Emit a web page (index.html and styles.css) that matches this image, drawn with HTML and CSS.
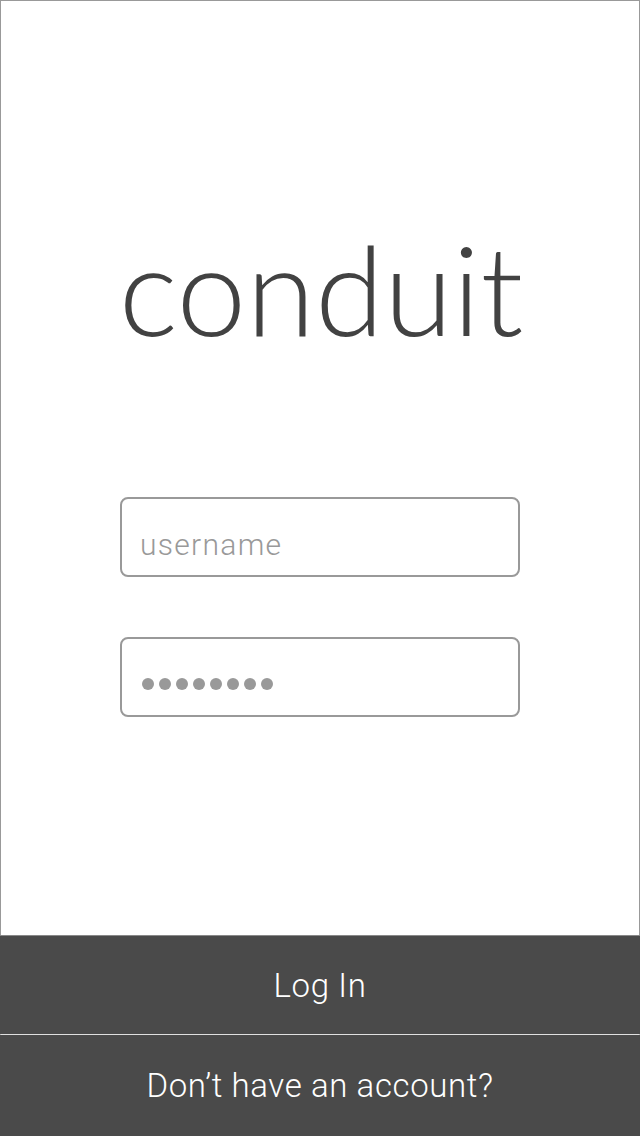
FILE: index.html
```html
<!DOCTYPE html>
<html>
<head>
<meta charset="utf-8">
<link rel="stylesheet" href="styles.css">
</head>
<body>
<div class="screen">
  <div class="top">
    <div class="brand">conduit</div>
    <div class="form">
      <div class="field"><span class="placeholder">username</span></div>
      <div class="field"><span class="dots"><i></i><i></i><i></i><i></i><i></i><i></i><i></i><i></i></span></div>
    </div>
    <div class="spacer"></div>
    <div class="login">Log In</div>
  </div>
  <div class="signup">Don’t have an account?</div>
</div>
</body>
</html>
```
FILE: styles.css
```css
html, body {
  margin: 0;
  padding: 0;
  background: #fff;
}
.screen {
  width: 640px;
  height: 1136px;
  display: flex;
  flex-direction: column;
  box-sizing: border-box;
}
.top {
  flex: 1;
  display: flex;
  flex-direction: column;
  border: 1px solid #999;
  border-bottom: 1px solid #e0e0e0;
}
.brand {
  margin-top: 223px;
  height: 128px;
  line-height: 128px;
  text-align: center;
  font-family: Lato, "Open Sans", sans-serif;
  font-weight: 300;
  font-size: 125px;
  color: #424242;
  padding-left: 2px;
}
.form {
  margin-top: 145px;
  display: flex;
  flex-direction: column;
  align-items: center;
  gap: 60px;
}
.field {
  width: 400px;
  height: 80px;
  box-sizing: border-box;
  border: 2px solid #999;
  border-radius: 8px;
  padding: 14px 0 0 18px;
  display: flex;
  align-items: center;
}
.placeholder {
  font-family: Roboto, "Liberation Sans", sans-serif;
  font-weight: 300;
  font-size: 30px;
  letter-spacing: 1.3px;
  color: #999;
}
.dots {
  display: flex;
  gap: 5px;
  padding-left: 2px;
}
.dots i {
  display: block;
  width: 12px;
  height: 12px;
  border-radius: 50%;
  background: #999;
}
.spacer {
  flex: 1;
}
.login {
  height: 98px;
  border-top: 1px solid #888;
  background: #4a4a4a;
  color: #fff;
  display: flex;
  align-items: center;
  justify-content: center;
  font-family: Roboto, "Liberation Sans", sans-serif;
  font-weight: 300;
  font-size: 33px;
  letter-spacing: 0.6px;
  margin: 0 -1px;
}
.signup {
  height: 101px;
  background: #4a4a4a;
  color: #fff;
  display: flex;
  align-items: center;
  justify-content: center;
  font-family: Roboto, "Liberation Sans", sans-serif;
  font-weight: 300;
  font-size: 33px;
  letter-spacing: 0.6px;
}
```
